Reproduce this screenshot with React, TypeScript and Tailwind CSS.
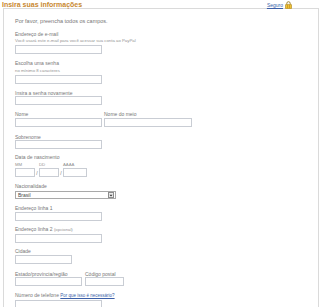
import React from 'react';

const labelCls = 'block text-[5px] leading-[6px] text-[#777]';
const hintCls = 'block text-[4.3px] leading-[5px] text-[#939393]';

const Field: React.FC<{ w: number; className?: string }> = ({ w, className }) => (
  <input
    type="text"
    style={{ width: w }}
    className={`block h-[9px] border border-[#c9cdd4] bg-white p-0 text-[5px] outline-none ${className ?? ''}`}
  />
);

const Lock: React.FC = () => (
  <svg width="7" height="8" viewBox="0 0 7 8" className="block">
    <path d="M1.8 3.6V2.4a1.7 1.7 0 0 1 3.4 0v1.2" fill="none" stroke="#9a7a1e" strokeWidth="0.9" />
    <rect x="0.5" y="3.4" width="6" height="4.3" rx="0.5" fill="#f0c233" stroke="#a9811b" strokeWidth="0.6" />
    <rect x="2.2" y="3.8" width="0.8" height="3.5" fill="#c8961f" />
    <rect x="4" y="3.8" width="0.8" height="3.5" fill="#c8961f" />
  </svg>
);

const App: React.FC = () => {
  return (
    <div className="h-[307px] w-[320px] overflow-hidden bg-white font-['Liberation_Sans',Arial,sans-serif]">
      <div className="relative flex h-[8px] items-start justify-between pl-[2px] pr-[28px]">
        <h1 className="text-[7px] font-bold leading-[9px] text-[#c8872f]">Insira suas informações</h1>
        <div className="flex items-center gap-[2px] pt-[1px]">
          <a href="#" className="text-[5px] leading-[6px] text-[#3b5fa8] underline">Seguro</a>
          <Lock />
        </div>
      </div>

      <div className="ml-[3px] h-[299px] w-[316px] border-l border-r border-t border-[#dadada] pl-[11px] pt-[9px]">
        <p className="text-[5.5px] leading-[6px] text-[#777]">Por favor, preencha todos os campos.</p>

        <label className={`${labelCls} mt-[7px]`}>Endereço de e-mail</label>
        <span className={`${hintCls} mt-[1px]`}>Você usará este e-mail para você acessar sua conta ao PayPal</span>
        <Field w={87} className="mt-[2px]" />

        <label className={`${labelCls} mt-[6px]`}>Escolha uma senha</label>
        <span className={`${hintCls} mt-[2px]`}>no mínimo 8 caracteres</span>
        <Field w={87} className="mt-[2px]" />

        <label className={`${labelCls} mt-[6px]`}>Insira a senha novamente</label>
        <Field w={87} />

        <div className="mt-[6px] flex gap-[2px]">
          <div>
            <label className={labelCls}>Nome</label>
            <Field w={87} className="mt-[1px]" />
          </div>
          <div>
            <label className={labelCls}>Nome do meio</label>
            <Field w={88} className="mt-[1px] bg-[#fffef6]" />
          </div>
        </div>

        <label className={`${labelCls} mt-[7px]`}>Sobrenome</label>
        <Field w={87} />

        <label className={`${labelCls} mt-[5px]`}>Data de nascimento</label>
        <div className="mt-[2px] flex items-end">
          <div>
            <span className={hintCls}>MM</span>
            <Field w={20} className="mt-[1px]" />
          </div>
          <span className="w-[4px] text-center text-[5px] leading-[7px] text-[#777]">/</span>
          <div>
            <span className={hintCls}>DD</span>
            <Field w={20} className="mt-[1px]" />
          </div>
          <span className="w-[4px] text-center text-[5px] leading-[7px] text-[#777]">/</span>
          <div>
            <span className={hintCls}>AAAA</span>
            <Field w={24} className="mt-[1px]" />
          </div>
        </div>

        <label className={`${labelCls} mt-[6px]`}>Nacionalidade</label>
        <div className="mt-[2px] flex h-[8px] w-[101px] items-center justify-between border border-[#a9a9a9] bg-white">
          <span className="pl-[2px] text-[5px] leading-[6px] text-[#444]">Brasil</span>
          <span className="mr-[1px] flex h-[6px] w-[6px] items-center justify-center border border-[#8c8c8c] bg-[#ececec]">
            <svg width="4" height="3" viewBox="0 0 4 3"><path d="M0.5 0.8h3L2 2.5z" fill="#333" /></svg>
          </span>
        </div>

        <label className={`${labelCls} mt-[6px]`}>Endereço linha 1</label>
        <Field w={87} className="mt-[1px]" />

        <label className={`${labelCls} mt-[5px]`}>
          Endereço linha 2 <span className="text-[4.3px] text-[#939393]">(opcional)</span>
        </label>
        <Field w={87} className="mt-[1px]" />

        <label className={`${labelCls} mt-[5px]`}>Cidade</label>
        <Field w={57} className="mt-[1px]" />

        <div className="mt-[7px] flex gap-[3px]">
          <div>
            <label className={labelCls}>Estado/província/região</label>
            <Field w={67} />
          </div>
          <div>
            <label className={labelCls}>Código postal</label>
            <Field w={39} />
          </div>
        </div>

        <label className={`${labelCls} mt-[6px]`}>
          Número de telefone{' '}
          <a href="#" className="text-[4.5px] text-[#3b5fa8] underline">Por que isso é necessário?</a>
        </label>
        <Field w={87} className="mt-[1px]" />
      </div>
    </div>
  );
};

export default App;
